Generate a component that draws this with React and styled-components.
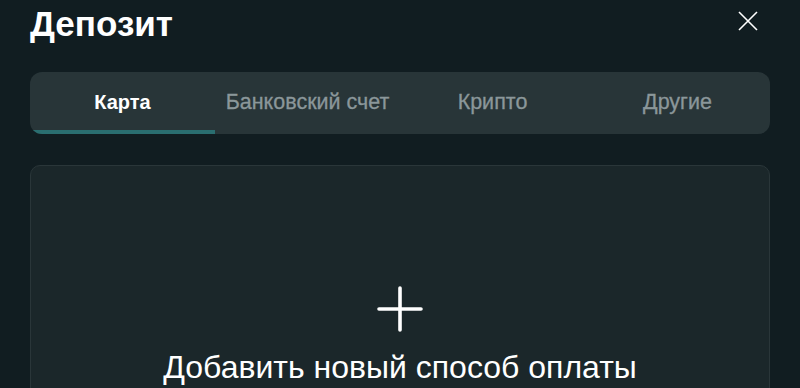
import React, { useState } from "react";
import styled, { createGlobalStyle } from "styled-components";

const GlobalStyle = createGlobalStyle`
  html, body {
    margin: 0;
    padding: 0;
    background: #111d21;
    font-family: "Liberation Sans", Arial, sans-serif;
  }
`;

const Page = styled.div`
  width: 800px;
  height: 388px;
  box-sizing: border-box;
  padding: 0 30px;
  overflow: hidden;
  color: #fff;
`;

const Header = styled.div`
  display: flex;
  align-items: center;
  justify-content: space-between;
  height: 48px;
`;

const Title = styled.h1`
  margin: 0;
  font-size: 35px;
  font-weight: 700;
`;

const CloseButton = styled.button`
  display: flex;
  align-self: flex-start;
  margin: 11px 12px 0 0;
  padding: 0;
  border: 0;
  background: none;
  color: #fff;
  cursor: pointer;
`;

const Tabs = styled.div`
  display: grid;
  grid-template-columns: repeat(4, 1fr);
  height: 62px;
  margin-top: 24px;
  border-radius: 12px;
  background: #283538;
  overflow: hidden;
`;

const Tab = styled.button`
  border: 0;
  padding: 3px 0 0;
  background: none;
  font-family: inherit;
  font-size: ${(p) => (p.active ? "20px" : "21.5px")};
  font-weight: ${(p) => (p.active ? 700 : 400)};
  -webkit-text-stroke: ${(p) => (p.active ? "0" : "0.3px currentColor")};
  color: ${(p) => (p.active ? "#fff" : "#8b979a")};
  border-bottom: 4px solid ${(p) => (p.active ? "#2a6e70" : "transparent")};
  cursor: pointer;
`;

const Card = styled.div`
  display: flex;
  flex-direction: column;
  align-items: center;
  margin-top: 31px;
  height: 300px;
  padding-top: 120px;
  box-sizing: border-box;
  background: #1b272a;
  border: 1px solid #2a3639;
  border-radius: 10px;
`;

const AddLabel = styled.div`
  margin-top: 17px;
  font-size: 32px;
  color: #fff;
`;

const tabs = ["Карта", "Банковский счет", "Крипто", "Другие"];

const App = () => {
  const [active, setActive] = useState(0);

  return (
    <Page>
      <GlobalStyle />
      <Header>
        <Title>Депозит</Title>
        <CloseButton>
          <svg width="20" height="20" viewBox="0 0 20 20" fill="none">
            <path d="M1 1L19 19M19 1L1 19" stroke="currentColor" strokeWidth="1.6" />
          </svg>
        </CloseButton>
      </Header>
      <Tabs>
        {tabs.map((t, i) => (
          <Tab key={t} active={i === active} onClick={() => setActive(i)}>
            {t}
          </Tab>
        ))}
      </Tabs>
      <Card>
        <svg width="46" height="46" viewBox="0 0 46 46" fill="none">
          <path d="M23 2V44M2 23H44" stroke="#fff" strokeWidth="3.6" strokeLinecap="round" />
        </svg>
        <AddLabel>Добавить новый способ оплаты</AddLabel>
      </Card>
    </Page>
  );
};

export default App;
